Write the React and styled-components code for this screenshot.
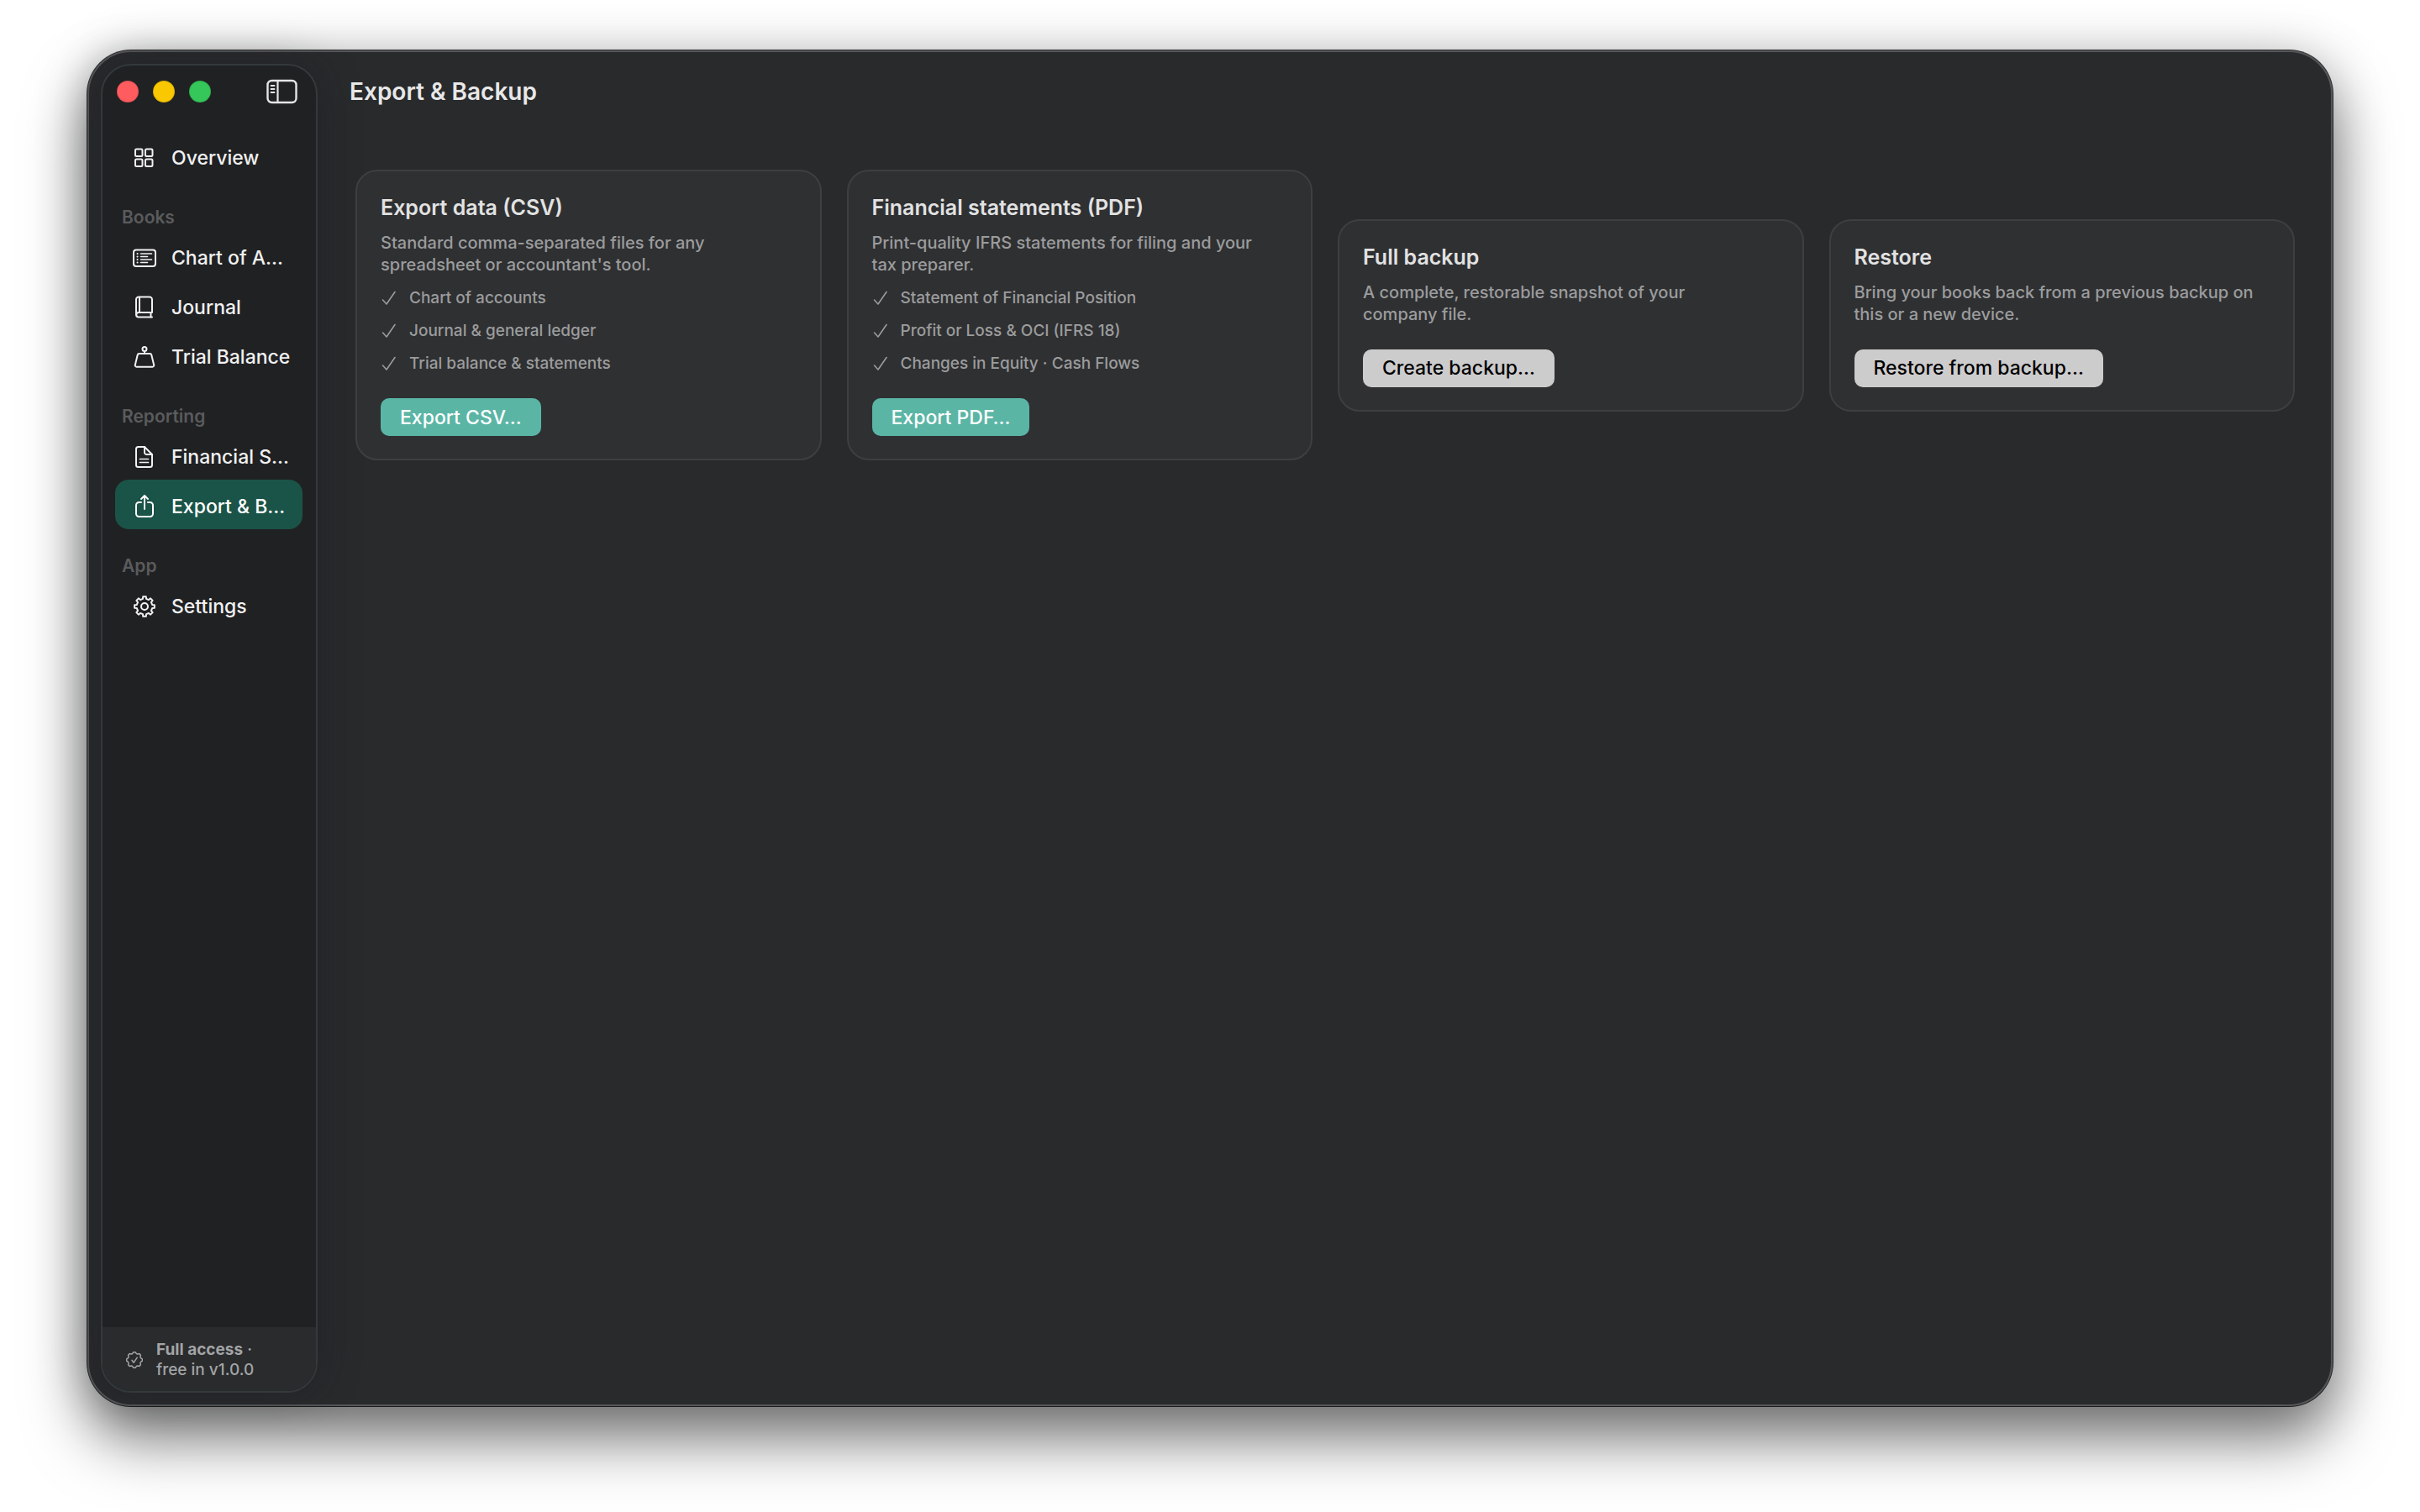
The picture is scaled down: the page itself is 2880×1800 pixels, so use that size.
import React from "react";
import styled, { createGlobalStyle, css } from "styled-components";

const GlobalStyle = createGlobalStyle`
  * {
    box-sizing: border-box;
  }

  body {
    margin: 0;
    background: #fff;
    font-family: Inter, "Liberation Sans", sans-serif;
  }

  h1, h2, p, ul {
    margin: 0;
    padding: 0;
  }
`;

const Desktop = styled.div`
  display: flex;
  min-height: 100vh;
  padding: 60px 104px 126px;
  overflow: hidden;
`;

const Window = styled.div`
  flex: 1;
  display: flex;
  padding: 14px;
  background: #292a2c;
  border: 2px solid #55575a;
  border-radius: 52px;
  box-shadow:
    0 0 0 1px rgba(0, 0, 0, 0.8),
    0 40px 72px rgba(0, 0, 0, 0.5),
    0 4px 64px rgba(0, 0, 0, 0.2);
`;

const Sidebar = styled.aside`
  display: flex;
  flex-direction: column;
  width: 258px;
  background: #202123;
  border: 2px solid #34393b;
  border-radius: 36px;
  box-shadow: 0 0 50px rgba(16, 24, 28, 0.35);
  overflow: hidden;
`;

const TitleBar = styled.div`
  display: flex;
  align-items: center;
  justify-content: space-between;
  height: 62px;
  padding: 0 22px 0 17px;
`;

const Lights = styled.div`
  display: flex;
  gap: 17px;
`;

const Light = styled.button`
  width: 26px;
  height: 26px;
  padding: 0;
  border: 1px solid rgba(0, 0, 0, 0.12);
  border-radius: 50%;
  background: ${({ $color }) => $color};
`;

const ToggleButton = styled.button`
  display: flex;
  padding: 0;
  border: 0;
  background: none;
  color: #e6e6e6;
`;

const Nav = styled.nav`
  flex: 1;
  padding: 16px 16px 16px 15px;
`;

const Section = styled.h2`
  display: flex;
  align-items: flex-end;
  height: 60px;
  padding: 0 0 4px 8px;
  font-size: 21px;
  line-height: 24px;
  font-weight: 600;
  color: #5a5b5d;
`;

const NavItem = styled.a`
  display: flex;
  align-items: center;
  gap: 16px;
  height: 59px;
  padding: 4px 0 0 19px;
  border-radius: 16px;
  font-size: 23px;
  line-height: 30px;
  font-weight: 500;
  color: #f1f1f1;
  text-decoration: none;
  white-space: nowrap;

  ${({ $active }) =>
    $active &&
    css`
      background: #1a5347;
      color: #fff;
    `}
`;

const Access = styled.footer`
  display: flex;
  align-items: center;
  gap: 16px;
  height: 76px;
  padding: 2px 24px 0 28px;
  background: #292b2d;
  font-size: 19px;
  line-height: 24px;
  font-weight: 500;
  color: #a3a4a5;

  strong {
    font-weight: 700;
  }
`;

const Main = styled.main`
  flex: 1;
  padding: 0 29px 0 45px;
`;

const PageTitle = styled.h1`
  margin-left: -7px;
  font-size: 28px;
  line-height: 66px;
  font-weight: 600;
  color: #e8e8e8;
`;

const Cards = styled.div`
  display: grid;
  grid-template-columns: repeat(4, 1fr);
  align-items: center;
  gap: 30px;
  margin-top: 60px;
`;

const Card = styled.section`
  padding: 27px 28px;
  background: #2f3032;
  border: 2px solid #3e3f41;
  border-radius: 26px;
`;

const CardTitle = styled.h2`
  font-size: 25px;
  line-height: 32px;
  font-weight: 600;
  color: #e2e2e2;
`;

const CardText = styled.p`
  margin-top: 13px;
  font-size: 20px;
  line-height: 26px;
  font-weight: 500;
  color: #9b9c9d;
  white-space: pre-line;
`;

const Points = styled.ul`
  display: grid;
  gap: 15px;
  margin-top: 15px;
  list-style: none;
`;

const Point = styled.li`
  display: flex;
  align-items: center;
  gap: 14px;
  font-size: 19px;
  line-height: 24px;
  font-weight: 500;
  color: #9b9c9d;
`;

const Action = styled.button`
  display: block;
  height: 45px;
  margin-top: 29px;
  padding: 0 23px;
  border: 0;
  border-radius: 10px;
  font-family: inherit;
  font-size: 23px;
  line-height: 30px;
  font-weight: 500;
  background: ${({ $primary }) => ($primary ? "#5ab5a5" : "#cdcccd")};
  color: ${({ $primary }) => ($primary ? "#fff" : "#000")};
`;

const Svg = styled.svg`
  flex: none;
  fill: none;
  stroke: currentColor;
  stroke-width: 2;
  stroke-linecap: round;
  stroke-linejoin: round;
`;

const Glyph = ({ size = 32, children }) => (
  <Svg width={size} height={size} viewBox={`0 0 ${size} ${size}`} aria-hidden="true">
    {children}
  </Svg>
);

const GridIcon = () => (
  <Glyph>
    <rect x="5" y="5.5" width="8.5" height="8.5" rx="1.5" />
    <rect x="17" y="5.5" width="8.5" height="8.5" rx="1.5" />
    <rect x="5" y="17.5" width="8.5" height="8.5" rx="1.5" />
    <rect x="17" y="17.5" width="8.5" height="8.5" rx="1.5" />
  </Glyph>
);

const ListIcon = () => (
  <Glyph>
    <rect x="3" y="6.5" width="26" height="19.5" rx="3" />
    <path d="M11.5 11h13M11.5 14.5h8M11.5 18h13M11.5 21.5h8" strokeWidth="1.6" />
    <path d="M7.5 11h.1M7.5 14.5h.1M7.5 18h.1M7.5 21.5h.1" />
  </Glyph>
);

const BookIcon = () => (
  <Glyph>
    <path d="M25 27.5H9a3 3 0 0 1-3-3v-18a3 3 0 0 1 3-3h13a3 3 0 0 1 3 3V22H9a2.7 2.7 0 0 0 0 5.5" />
    <path d="M10 4v18M23.5 22v5.5" />
  </Glyph>
);

const WeightIcon = () => (
  <Glyph>
    <circle cx="16" cy="6.5" r="2.5" />
    <path d="M16 9v3" />
    <path d="M9.5 12h13a1.8 1.8 0 0 1 1.7 1.3l3 12.2a1.8 1.8 0 0 1-1.7 2.2h-19a1.8 1.8 0 0 1-1.7-2.2l3-12.2a1.8 1.8 0 0 1 1.7-1.3z" />
  </Glyph>
);

const DocIcon = () => (
  <Glyph>
    <path d="M8.5 4H16l9 9v12.5a2.5 2.5 0 0 1-2.5 2.5h-14A2.5 2.5 0 0 1 6 25.5v-19A2.5 2.5 0 0 1 8.5 4z" />
    <path d="M16 4v6.5a2.5 2.5 0 0 0 2.5 2.5H25" />
    <path d="M10.5 18.5h10M10.5 22.5h10" strokeWidth="1.7" />
  </Glyph>
);

const ShareIcon = () => (
  <Glyph>
    <path d="M12 11H9.5A3.5 3.5 0 0 0 6 14.5v10A3.5 3.5 0 0 0 9.5 28h13a3.5 3.5 0 0 0 3.5-3.5v-10a3.5 3.5 0 0 0-3.500-3.5H20" />
    <path d="M16 19V3.5M12 7l4-4 4 4" />
  </Glyph>
);

// closed outline that swings between an inner and an outer radius
const toothed = (c, teeth, inner, outer, top, foot) => {
  const step = (Math.PI * 2) / teeth;
  const at = (r, a) => `${(c + r * Math.sin(a)).toFixed(2)} ${(c - r * Math.cos(a)).toFixed(2)}`;
  const pts = [];
  for (let i = 0; i < teeth; i++) {
    const a = i * step;
    pts.push(at(inner, a - foot), at(outer, a - top), at(outer, a + top), at(inner, a + foot));
  }
  return `M${pts.join("L")}Z`;
};

const GearIcon = () => (
  <Glyph>
    <path d={toothed(16, 8, 9.4, 12, 0.15, 0.22)} />
    <circle cx="16" cy="16" r="4" />
  </Glyph>
);

const SealIcon = () => (
  <Glyph size={20}>
    <path d={toothed(10, 8, 7.9, 9.4, 0.12, 0.3)} strokeWidth="1.5" />
    <path d="M7 10.3l2.2 2.9 4-6" strokeWidth="1.5" />
  </Glyph>
);

const CheckIcon = () => (
  <Glyph size={20}>
    <path d="M2.5 12l4.5 5L17 2.5" strokeWidth="1.6" />
  </Glyph>
);

const SidebarIcon = () => (
  <Svg width="37" height="30" viewBox="0 0 37 30" aria-hidden="true">
    <rect x="1.5" y="2" width="34" height="26" rx="5" strokeWidth="2.4" />
    <path d="M13.5 2v26" strokeWidth="2.2" />
    <path d="M5.5 8h4M5.5 12h4M5.5 16h4" strokeWidth="1.8" />
  </Svg>
);

const menu = [
  { items: [{ label: "Overview", icon: GridIcon }] },
  {
    title: "Books",
    items: [
      { label: "Chart of A…", icon: ListIcon },
      { label: "Journal", icon: BookIcon },
      { label: "Trial Balance", icon: WeightIcon },
    ],
  },
  {
    title: "Reporting",
    items: [
      { label: "Financial S…", icon: DocIcon },
      { label: "Export & B…", icon: ShareIcon, active: true },
    ],
  },
  { title: "App", items: [{ label: "Settings", icon: GearIcon }] },
];

const cards = [
  {
    title: "Export data (CSV)",
    text: "Standard comma-separated files for any\nspreadsheet or accountant's tool.",
    points: ["Chart of accounts", "Journal & general ledger", "Trial balance & statements"],
    action: "Export CSV…",
    primary: true,
  },
  {
    title: "Financial statements (PDF)",
    text: "Print-quality IFRS statements for filing and your\ntax preparer.",
    points: [
      "Statement of Financial Position",
      "Profit or Loss & OCI (IFRS 18)",
      "Changes in Equity · Cash Flows",
    ],
    action: "Export PDF…",
    primary: true,
  },
  {
    title: "Full backup",
    text: "A complete, restorable snapshot of your\ncompany file.",
    action: "Create backup…",
  },
  {
    title: "Restore",
    text: "Bring your books back from a previous backup on\nthis or a new device.",
    action: "Restore from backup…",
  },
];

const App = () => {
  return (
    <>
      <GlobalStyle />
      <Desktop>
        <Window>
          <Sidebar>
            <TitleBar>
              <Lights>
                <Light $color="#ff5c60" aria-label="Close" />
                <Light $color="#fac800" aria-label="Minimize" />
                <Light $color="#35c759" aria-label="Zoom" />
              </Lights>
              <ToggleButton aria-label="Toggle sidebar">
                <SidebarIcon />
              </ToggleButton>
            </TitleBar>

            <Nav>
              {menu.map(({ title, items }) => (
                <React.Fragment key={title || "top"}>
                  {title && <Section>{title}</Section>}
                  {items.map(({ label, icon: Icon, active }) => (
                    <NavItem key={label} href="#" $active={active}>
                      <Icon />
                      {label}
                    </NavItem>
                  ))}
                </React.Fragment>
              ))}
            </Nav>

            <Access>
              <SealIcon />
              <div>
                <div>
                  <strong>Full access</strong> ·
                </div>
                <div>free in v1.0.0</div>
              </div>
            </Access>
          </Sidebar>

          <Main>
            <PageTitle>Export &amp; Backup</PageTitle>
            <Cards>
              {cards.map((card) => (
                <Card key={card.title}>
                  <CardTitle>{card.title}</CardTitle>
                  <CardText>{card.text}</CardText>
                  {card.points && (
                    <Points>
                      {card.points.map((point) => (
                        <Point key={point}>
                          <CheckIcon />
                          {point}
                        </Point>
                      ))}
                    </Points>
                  )}
                  <Action $primary={card.primary}>{card.action}</Action>
                </Card>
              ))}
            </Cards>
          </Main>
        </Window>
      </Desktop>
    </>
  );
};

export default App;
